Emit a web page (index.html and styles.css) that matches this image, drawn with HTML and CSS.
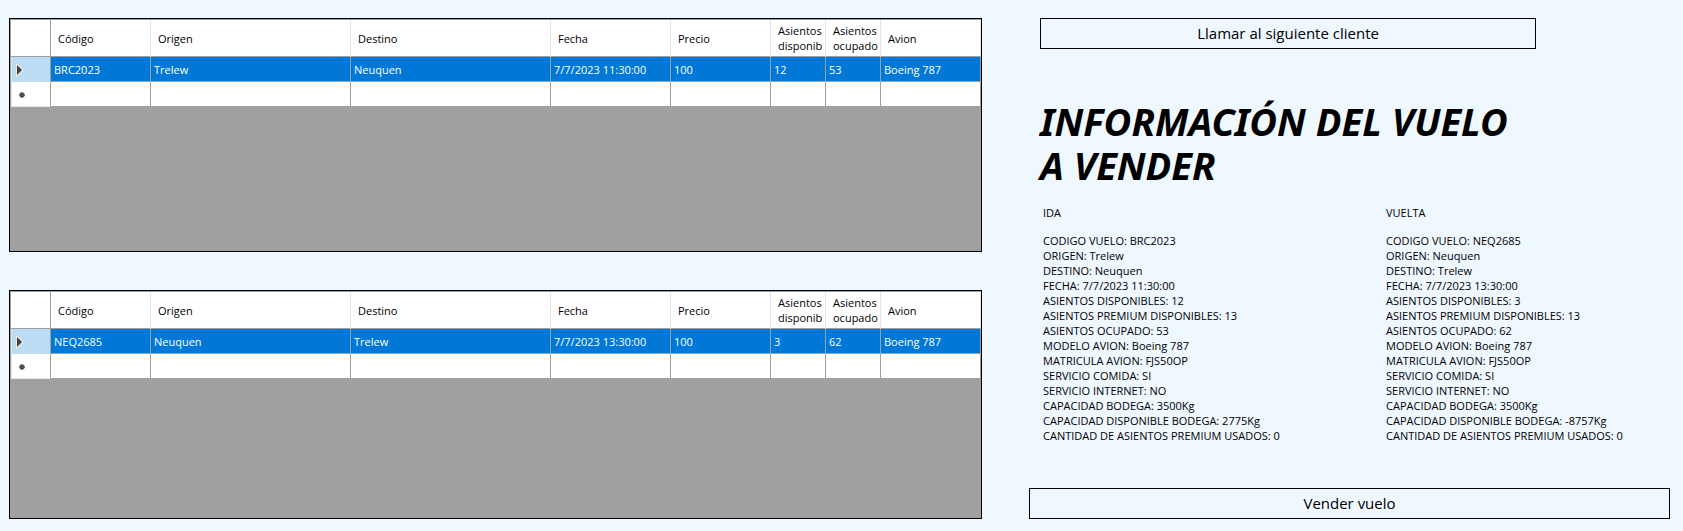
FILE: index.html
```html
<!DOCTYPE html>
<html lang="es">
<head>
<meta charset="utf-8">
<meta name="viewport" content="width=device-width, initial-scale=1">
<title>Vender vuelo</title>
<link rel="stylesheet" href="styles.css">
</head>
<body>
<main class="page">
  <section class="grids">
    <div class="grid-box">
      <table class="flights" aria-label="Vuelos de ida">
        <colgroup><col class="c-mark"><col class="c-code"><col class="c-place"><col class="c-place"><col class="c-date"><col class="c-price"><col class="c-seats"><col class="c-seats"><col class="c-plane"></colgroup>
        <thead>
          <tr><th class="mark"></th><th>Código</th><th>Origen</th><th>Destino</th><th>Fecha</th><th>Precio</th><th>Asientos disponib</th><th>Asientos ocupado</th><th>Avion</th></tr>
        </thead>
        <tbody>
          <tr class="selected">
            <th class="mark"><svg class="icon" width="16" height="18" viewBox="0 0 16 18" aria-hidden="true"><path d="M4 4h1.500l6 6-6 6H4z" fill="#f7e9df"/><path d="M5 5v10l5-5z" fill="#404040"/></svg></th>
            <td>BRC2023</td><td>Trelew</td><td>Neuquen</td><td>7/7/2023 11:30:00</td><td>100</td><td>12</td><td>53</td><td>Boeing 787</td>
          </tr>
          <tr class="new">
            <th class="mark"><svg class="icon" width="16" height="18" viewBox="0 0 16 18" aria-hidden="true"><path d="M10 7v6M8 8l4 4M12 8l-4 4M7 10h6" stroke="#505050" stroke-width="1.400"/></svg></th>
            <td></td><td></td><td></td><td></td><td></td><td></td><td></td><td></td>
          </tr>
        </tbody>
      </table>
    </div>
    <div class="grid-box">
      <table class="flights" aria-label="Vuelos de vuelta">
        <colgroup><col class="c-mark"><col class="c-code"><col class="c-place"><col class="c-place"><col class="c-date"><col class="c-price"><col class="c-seats"><col class="c-seats"><col class="c-plane"></colgroup>
        <thead>
          <tr><th class="mark"></th><th>Código</th><th>Origen</th><th>Destino</th><th>Fecha</th><th>Precio</th><th>Asientos disponib</th><th>Asientos ocupado</th><th>Avion</th></tr>
        </thead>
        <tbody>
          <tr class="selected">
            <th class="mark"><svg class="icon" width="16" height="18" viewBox="0 0 16 18" aria-hidden="true"><path d="M4 4h1.500l6 6-6 6H4z" fill="#f7e9df"/><path d="M5 5v10l5-5z" fill="#404040"/></svg></th>
            <td>NEQ2685</td><td>Neuquen</td><td>Trelew</td><td>7/7/2023 13:30:00</td><td>100</td><td>3</td><td>62</td><td>Boeing 787</td>
          </tr>
          <tr class="new">
            <th class="mark"><svg class="icon" width="16" height="18" viewBox="0 0 16 18" aria-hidden="true"><path d="M10 7v6M8 8l4 4M12 8l-4 4M7 10h6" stroke="#505050" stroke-width="1.400"/></svg></th>
            <td></td><td></td><td></td><td></td><td></td><td></td><td></td><td></td>
          </tr>
        </tbody>
      </table>
    </div>
  </section>

  <section class="sale">
    <button class="btn btn-next" type="button">Llamar al siguiente cliente</button>
    <h1 class="title">INFORMACIÓN DEL VUELO<br>A VENDER</h1>
    <div class="details">
      <div class="leg">
        <h2 class="leg-name">IDA</h2>
        <ul class="facts">
          <li>CODIGO VUELO: BRC2023</li>
          <li>ORIGEN: Trelew</li>
          <li>DESTINO: Neuquen</li>
          <li>FECHA: 7/7/2023 11:30:00</li>
          <li>ASIENTOS DISPONIBLES: 12</li>
          <li>ASIENTOS PREMIUM DISPONIBLES: 13</li>
          <li>ASIENTOS OCUPADO: 53</li>
          <li>MODELO AVION: Boeing 787</li>
          <li>MATRICULA AVION: FJS50OP</li>
          <li>SERVICIO COMIDA: SI</li>
          <li>SERVICIO INTERNET: NO</li>
          <li>CAPACIDAD BODEGA: 3500Kg</li>
          <li>CAPACIDAD DISPONIBLE BODEGA: 2775Kg</li>
          <li>CANTIDAD DE ASIENTOS PREMIUM USADOS: 0</li>
        </ul>
      </div>
      <div class="leg">
        <h2 class="leg-name">VUELTA</h2>
        <ul class="facts">
          <li>CODIGO VUELO: NEQ2685</li>
          <li>ORIGEN: Neuquen</li>
          <li>DESTINO: Trelew</li>
          <li>FECHA: 7/7/2023 13:30:00</li>
          <li>ASIENTOS DISPONIBLES: 3</li>
          <li>ASIENTOS PREMIUM DISPONIBLES: 13</li>
          <li>ASIENTOS OCUPADO: 62</li>
          <li>MODELO AVION: Boeing 787</li>
          <li>MATRICULA AVION: FJS50OP</li>
          <li>SERVICIO COMIDA: SI</li>
          <li>SERVICIO INTERNET: NO</li>
          <li>CAPACIDAD BODEGA: 3500Kg</li>
          <li>CAPACIDAD DISPONIBLE BODEGA: -8757Kg</li>
          <li>CANTIDAD DE ASIENTOS PREMIUM USADOS: 0</li>
        </ul>
      </div>
    </div>
    <button class="btn btn-sell" type="button">Vender vuelo</button>
  </section>
</main>
</body>
</html>
```
FILE: styles.css
```css
* { box-sizing: border-box; }

body {
  margin: 0;
  background: #eff7ff;
  color: #000;
  font: 11px/15px "Open Sans", "Noto Sans", sans-serif;
}

.page {
  display: grid;
  grid-template-columns: 973fr 641fr;
  column-gap: 47px;
  min-height: 100vh;
  padding: 18px 13px 12px 9px;
}

.grids {
  display: grid;
  grid-template-rows: 234fr 229fr;
  row-gap: 38px;
  min-width: 0;
}

.grid-box {
  border: 1px solid #000;
  padding: 1px 0 0 1px;
  background: #a0a0a0;
  overflow: hidden;
}

.flights {
  width: 100%;
  table-layout: fixed;
  border-collapse: separate;
  border-spacing: 0;
}

/* The table spreads any spare width in proportion to these. */
.c-mark { width: 40px; }
.c-code, .c-price, .c-plane { width: 100px; }
.c-place { width: 200px; }
.c-date { width: 120px; }
.c-seats { width: 55px; }

.flights th,
.flights td {
  padding: 0 0 0 3px;
  border-right: 1px solid #a0a0a0;
  border-bottom: 1px solid #a0a0a0;
  background: #fff;
  font-weight: 400;
  text-align: left;
  overflow: hidden;
}

.flights thead th {
  height: 37px;
  padding-left: 7px;
  border-right-color: #e5e5e5;
}

.flights thead .mark { border-right-color: #a0a0a0; }

.flights tbody th,
.flights tbody td {
  height: 25px;
  white-space: nowrap;
}

.flights .selected td {
  background: #0078d7;
  color: #fff;
}

.flights tbody .mark {
  padding: 0;
  border-left: 1px solid #e5e5e5;
}

.flights .selected .mark {
  background: #bcdcf4;
  border-bottom-color: #bcdcf4;
}

.flights .new .mark { border-bottom-color: #e5e5e5; }

.icon {
  display: block;
  fill: none;
}

.sale {
  display: flex;
  flex-direction: column;
  min-width: 0;
}

.btn {
  height: 31px;
  padding: 0 0 2px;
  border: 1px solid #000;
  border-radius: 0;
  background: transparent;
  color: #000;
  font: 15px/20px "Open Sans", "Noto Sans", sans-serif;
}

.btn-next {
  width: 77.4%;
  margin-left: 11px;
}

.title {
  margin: 50px 0 0 11px;
  font-family: "Noto Sans", "Open Sans", sans-serif;
  font-size: 38px;
  line-height: 44px;
  font-weight: 700;
  font-style: italic;
  white-space: nowrap;
}

.details {
  display: grid;
  grid-template-columns: 343fr 284fr;
  margin: 18px 0 24px 14px;
}

.leg-name {
  margin: 0 0 13px;
  font-size: 11px;
  line-height: 15px;
  font-weight: 400;
}

.facts {
  margin: 0;
  padding: 0;
  list-style: none;
  white-space: nowrap;
}

.btn-sell {
  width: 100%;
  margin-top: auto;
}
```
